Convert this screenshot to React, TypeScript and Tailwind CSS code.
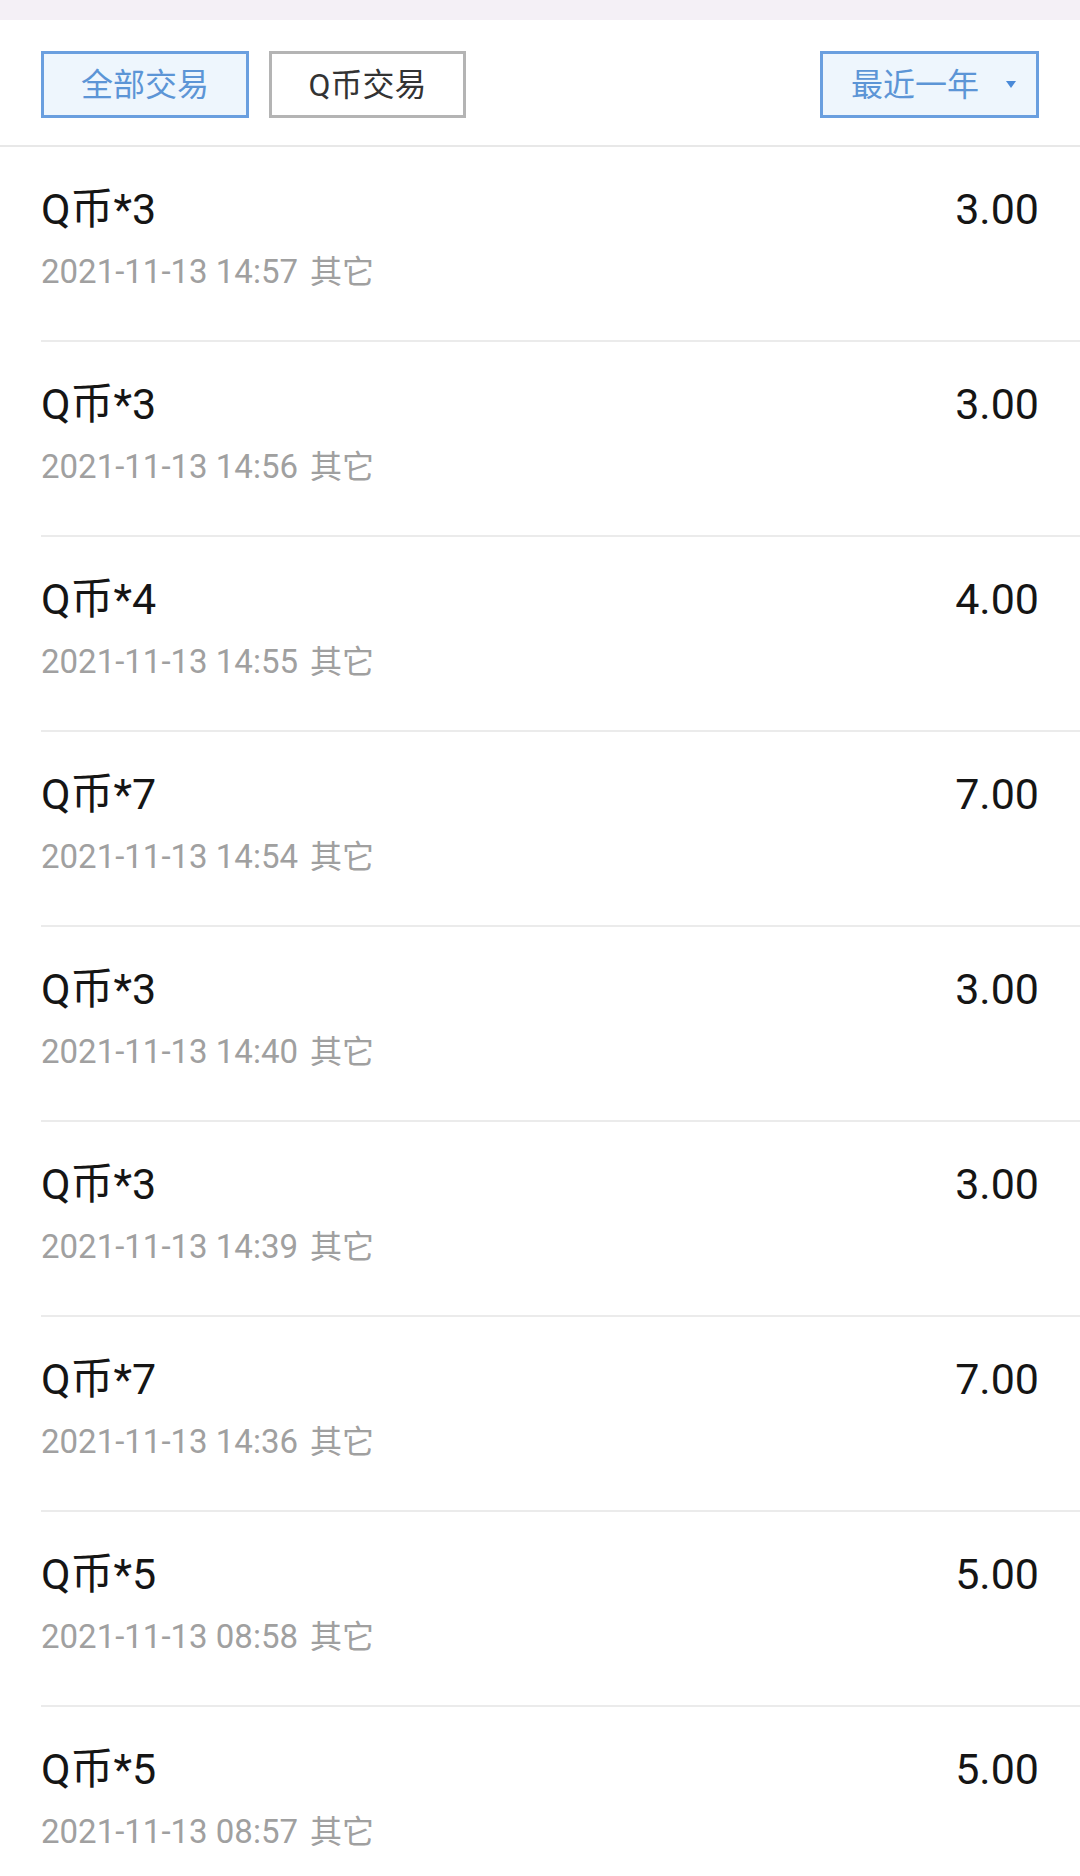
const rows = [
  { name: 'Q币*3', time: '2021-11-13 14:57', amount: '3.00' },
  { name: 'Q币*3', time: '2021-11-13 14:56', amount: '3.00' },
  { name: 'Q币*4', time: '2021-11-13 14:55', amount: '4.00' },
  { name: 'Q币*7', time: '2021-11-13 14:54', amount: '7.00' },
  { name: 'Q币*3', time: '2021-11-13 14:40', amount: '3.00' },
  { name: 'Q币*3', time: '2021-11-13 14:39', amount: '3.00' },
  { name: 'Q币*7', time: '2021-11-13 14:36', amount: '7.00' },
  { name: 'Q币*5', time: '2021-11-13 08:58', amount: '5.00' },
  { name: 'Q币*5', time: '2021-11-13 08:57', amount: '5.00' },
]

export default function App() {
  return (
    <div
      className="w-[1080px] h-[1876px] overflow-hidden bg-white"
      style={{ fontFamily: 'Roboto, "Noto Sans CJK SC", sans-serif' }}
    >
      <div className="h-[20px] bg-[#f4f0f6]" />

      {/* filter bar */}
      <div className="flex items-start justify-between h-[127px] px-[41px] pt-[31px] border-b-2 border-[#e8e8e8]">
        <div className="flex gap-[20px]">
          <button className="w-[208px] h-[67px] border-[3px] border-[#6a9fdf] bg-[#eef6fd] text-[#5c95d6] text-[32px] leading-none">
            全部交易
          </button>
          <button className="w-[197px] h-[67px] border-[3px] border-[#b4b4b4] bg-white text-[#333] text-[32px] leading-none">
            Q币交易
          </button>
        </div>
        <button className="flex items-center w-[219px] h-[67px] pl-[28px] border-[3px] border-[#6a9fdf] bg-[#eef6fd] text-[#5c95d6] text-[32px] leading-none">
          最近一年
          <svg className="ml-[27px]" width="10" height="7" viewBox="0 0 10 7">
            <path d="M0 0 L10 0 L5 7 Z" fill="#4a8ad8" />
          </svg>
        </button>
      </div>

      <div>
        {rows.map((r, i) => (
          <div key={i} className="pl-[41px]">
            <div className="flex justify-between pr-[41px] pt-[37px] pb-[50px] border-b-2 border-[#ebebeb]">
              <div>
                <div className="text-[43px] leading-[50px] text-[#151515]">{r.name}</div>
                <div className="mt-[20px] text-[33px] leading-[36px] text-[#a0a0a0]">
                  {r.time}
                  <span className="ml-[12px] text-[32px]">其它</span>
                </div>
              </div>
              <div className="text-[43px] leading-[50px] text-[#151515]">{r.amount}</div>
            </div>
          </div>
        ))}
      </div>
    </div>
  )
}
